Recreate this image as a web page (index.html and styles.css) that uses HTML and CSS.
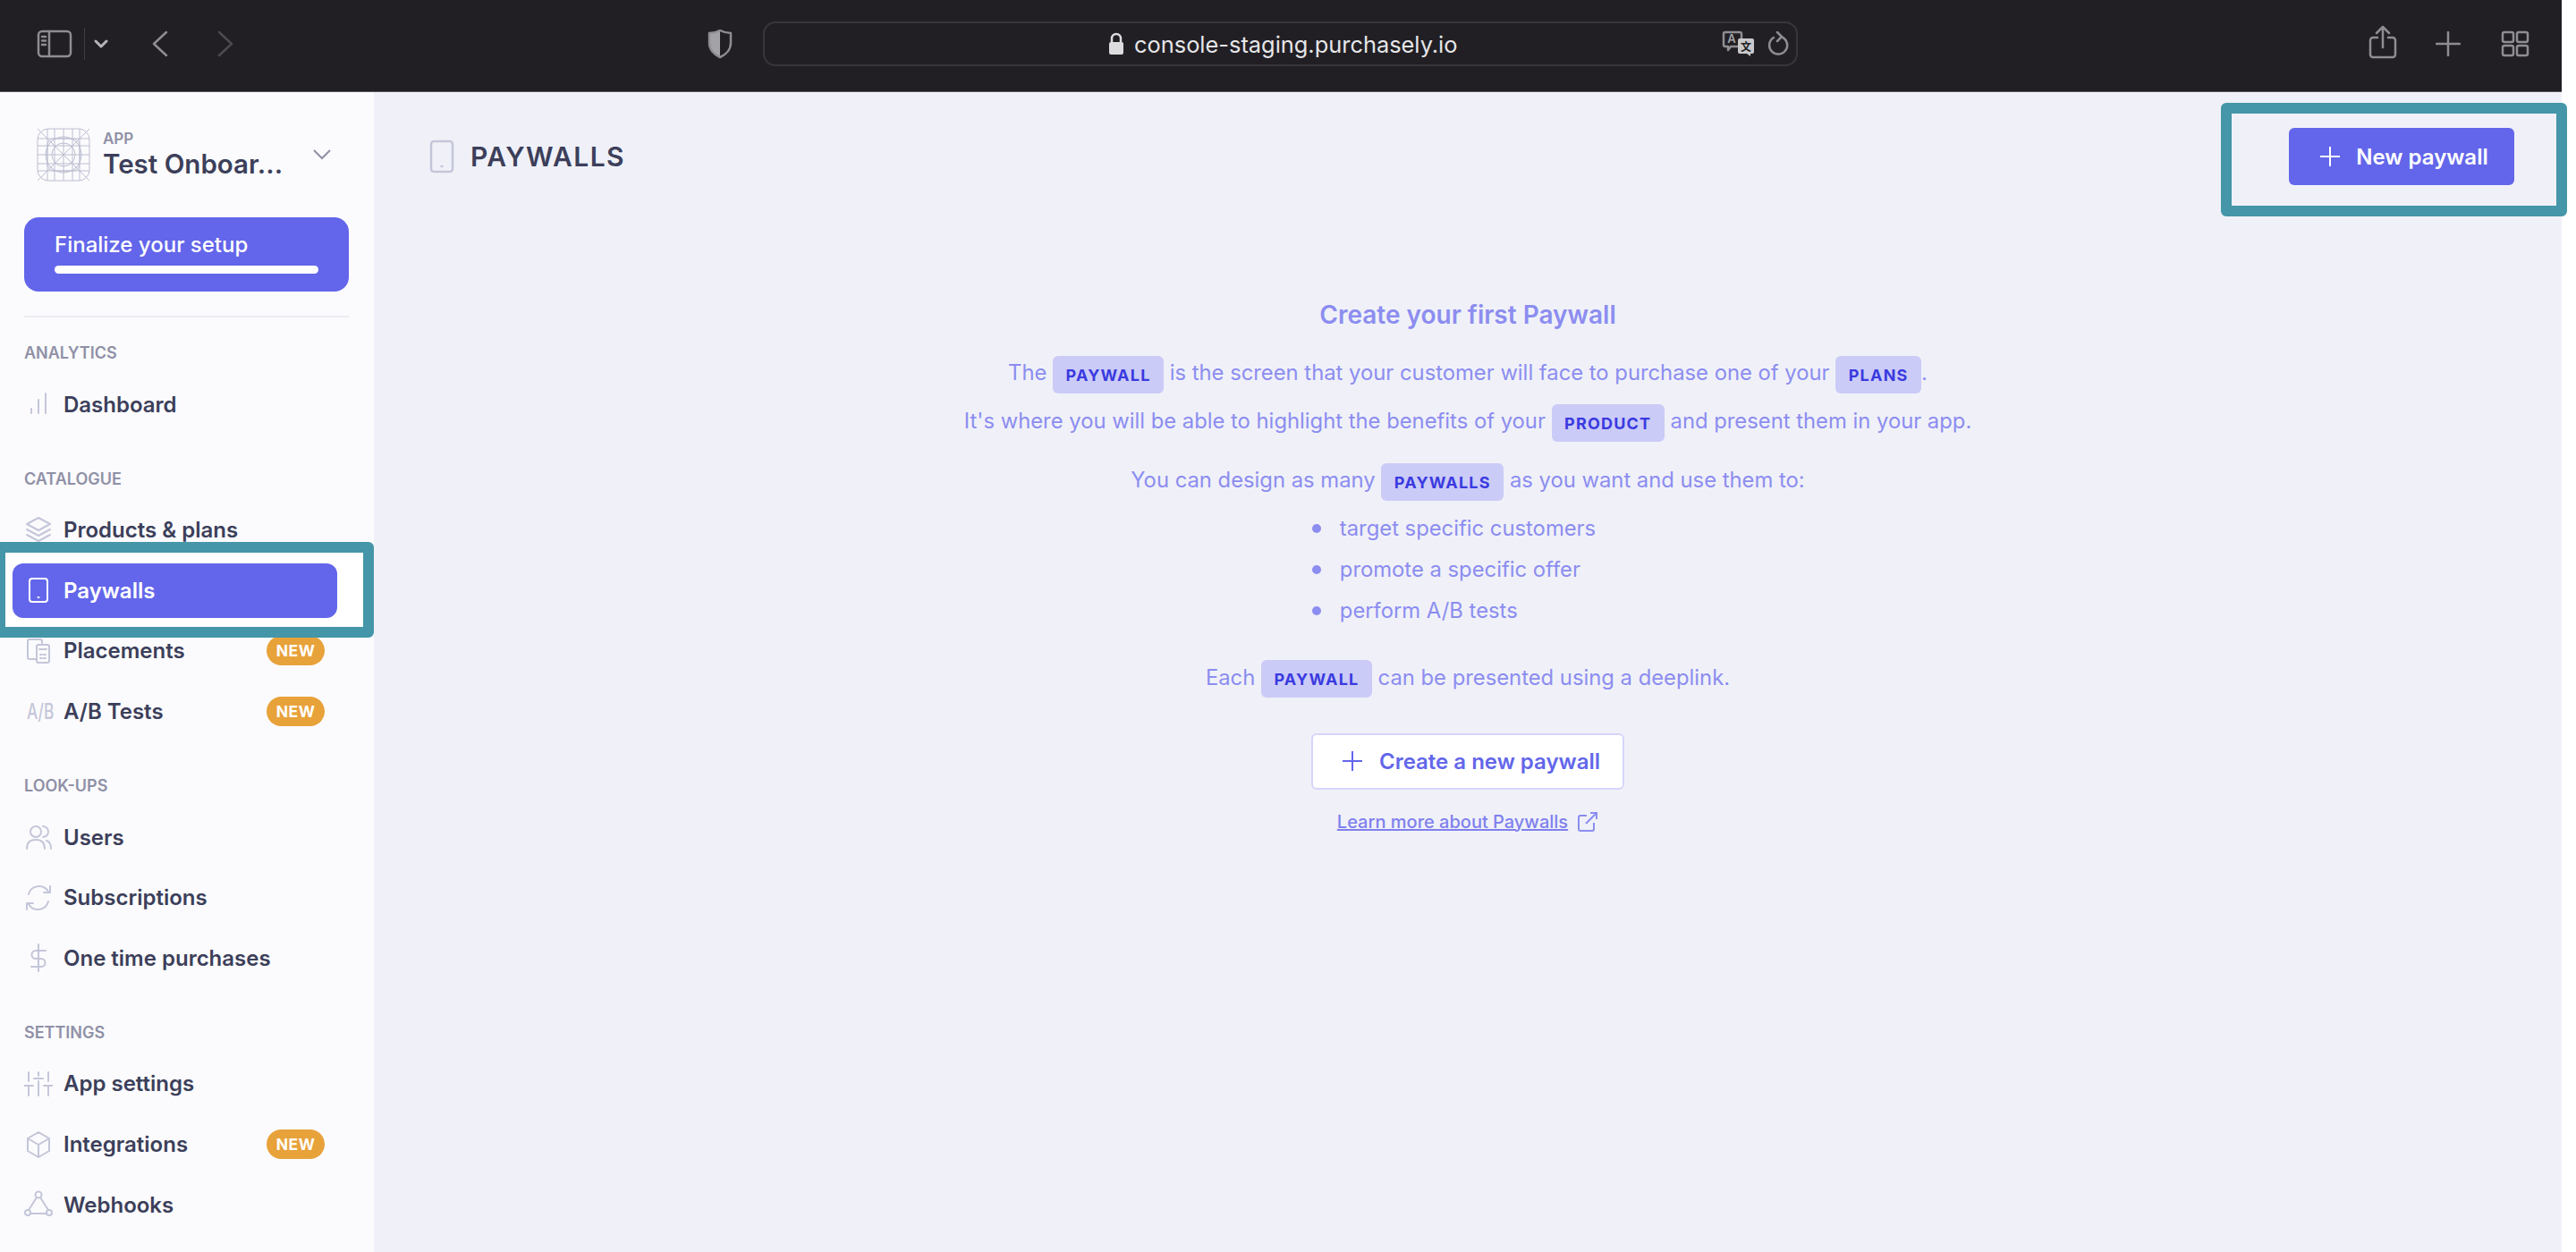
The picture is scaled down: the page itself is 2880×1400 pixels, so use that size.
FILE: index.html
```html
<!DOCTYPE html>
<html lang="en">
<head>
  <meta charset="UTF-8" />
  <title>Purchasely Console</title>
  <link rel="stylesheet" href="styles.css">
</head>
<body>
  <div class="app">
    <header class="toolbar">
      <div class="toolbar-left">
        <svg class="tb-sidebar" width="40" height="32" viewBox="0 0 40 32"><rect x="2" y="2" width="36" height="28" rx="4"/><path d="M14 2v28M6 8h4M6 12.500h4M6 17h4"/></svg>
        <span class="tb-sep"></span>
        <svg class="tb-chevron" width="16" height="12" viewBox="0 0 16 12"><path d="M2 3l6 6 6-6"/></svg>
        <svg class="tb-back" width="20" height="30" viewBox="0 0 20 30"><path d="M17 2L3 15l14 13"/></svg>
        <svg class="tb-forward" width="20" height="30" viewBox="0 0 20 30"><path d="M3 2l14 13L3 28"/></svg>
      </div>
      <svg class="tb-shield" width="28" height="34" viewBox="0 0 28 34"><path class="fill" d="M14 2C10 4 6 5 2 5v11c0 7 5 13 12 16z"/><path d="M14 2C10 4 6 5 2 5v11c0 7 5 13 12 16 7-3 12-9 12-16V5c-4 0-8-1-12-3z"/></svg>
      <div class="url-bar">
        <div class="url-center">
          <svg width="18" height="26" viewBox="0 0 18 26"><path class="lock-arc" d="M4 12V7a5 5 0 0 1 10 0v5"/><rect x="1" y="11" width="16" height="14" rx="2"/></svg>
          <span class="url-text">console-staging.purchasely.io</span>
        </div>
        <svg class="tb-translate" width="38" height="30" viewBox="0 0 38 30"><path d="M4 2h16a2 2 0 0 1 2 2v12a2 2 0 0 1-2 2H10l-3 4v-4H4a2 2 0 0 1-2-2V4a2 2 0 0 1 2-2z"/><text x="11" y="14" class="tr-a">A</text><path class="fill-light" d="M20 9h14a2 2 0 0 1 2 2v13a2 2 0 0 1-2 2h-2v3l-4-3h-8a2 2 0 0 1-2-2V11a2 2 0 0 1 2-2z"/><text x="27" y="23" class="tr-b">文</text></svg>
        <svg class="tb-reload" width="24" height="28" viewBox="0 0 24 28"><path d="M7 7a10 10 0 1 0 8-1M11 1l5 5-5 5"/></svg>
      </div>
      <div class="toolbar-right">
        <svg width="32" height="38" viewBox="0 0 32 38"><path d="M10 14H5a3 3 0 0 0-3 3v16a3 3 0 0 0 3 3h22a3 3 0 0 0 3-3V17a3 3 0 0 0-3-3h-5M16 25V2M9 9l7-7 7 7"/></svg>
        <svg width="28" height="28" viewBox="0 0 28 28"><path d="M14 1v26M1 14h26"/></svg>
        <svg class="tb-tabs" width="32" height="30" viewBox="0 0 32 30"><rect x="2" y="2" width="12" height="11" rx="2"/><rect x="18" y="2" width="12" height="11" rx="2"/><rect x="2" y="17" width="12" height="11" rx="2"/><rect x="18" y="17" width="12" height="11" rx="2"/></svg>
      </div>
    </header>

    <div class="layout">
      <aside class="sidebar">
        <div class="app-switch">
          <svg class="app-icon" width="60" height="60" viewBox="0 0 60 60">
            <rect x="1" y="1" width="58" height="58" rx="12"/>
            <circle cx="30" cy="30" r="13"/><circle cx="30" cy="30" r="20"/>
            <rect x="12" y="12" width="36" height="36" rx="8"/>
            <path d="M1 1l58 58M59 1L1 59M12 1v58M20 1v58M30 1v58M40 1v58M48 1v58M1 12h58M1 20h58M1 30h58M1 40h58M1 48h58"/>
          </svg>
          <div class="app-name">
            <div class="app-label">APP</div>
            <div class="app-title">Test Onboar...</div>
          </div>
          <svg class="app-chevron" width="20" height="12" viewBox="0 0 20 12"><path d="M1 1l9 9 9-9"/></svg>
        </div>

        <a class="setup-btn">
          <span>Finalize your setup</span>
          <span class="setup-progress"></span>
        </a>
        <div class="side-divider"></div>

        <section class="nav-section">
          <div class="nav-label">Analytics</div>
          <a class="nav-item">
            <svg class="nav-icon" viewBox="0 0 32 32"><path d="M8 21v5M16 11v15M24 4v22"/></svg>
            <span>Dashboard</span>
          </a>
        </section>

        <section class="nav-section">
          <div class="nav-label">Catalogue</div>
          <a class="nav-item">
            <svg class="nav-icon" viewBox="0 0 32 32"><path d="M16 2l13 7-13 7L3 9zM3 15l13 7 13-7M3 21l13 7 13-7"/></svg>
            <span>Products &amp; plans</span>
          </a>
          <div class="callout callout-nav">
            <a class="nav-item active">
              <svg class="nav-icon" viewBox="0 0 32 32"><rect x="6" y="3" width="20" height="26" rx="3"/><path d="M15.500 24h1"/></svg>
              <span>Paywalls</span>
            </a>
          </div>
          <a class="nav-item">
            <svg class="nav-icon" viewBox="0 0 32 32"><path d="M20 7V5a2 2 0 0 0-2-2H6a2 2 0 0 0-2 2v18a2 2 0 0 0 2 2h8"/><rect x="14" y="9" width="14" height="20" rx="2"/><path d="M17 14h8M18 20h2M22 20h2M18 24h2M22 24h2"/></svg>
            <span>Placements</span>
            <span class="badge">NEW</span>
          </a>
          <a class="nav-item">
            <span class="ab-icon">A/B</span>
            <span>A/B Tests</span>
            <span class="badge">NEW</span>
          </a>
        </section>

        <section class="nav-section">
          <div class="nav-label">Look-ups</div>
          <a class="nav-item">
            <svg class="nav-icon" viewBox="0 0 32 32"><circle cx="13" cy="10" r="6"/><path d="M21 4a6 6 0 0 1 0 12M3 29c0-7 4-10 10-10s10 3 10 10M25 20c3 1 5 4 5 9"/></svg>
            <span>Users</span>
          </a>
          <a class="nav-item">
            <svg class="nav-icon" viewBox="0 0 32 32"><path d="M5 12A12 12 0 0 1 27 9M29 3v7h-7M27 20A12 12 0 0 1 5 23M3 29v-7h7"/></svg>
            <span>Subscriptions</span>
          </a>
          <a class="nav-item">
            <svg class="nav-icon" viewBox="0 0 32 32"><path d="M16 1v30M24 8H13a4.500 4.500 0 0 0 0 9h6a4.500 4.500 0 0 1 0 9H8"/></svg>
            <span>One time purchases</span>
          </a>
        </section>

        <section class="nav-section">
          <div class="nav-label">Settings</div>
          <a class="nav-item">
            <svg class="nav-icon" viewBox="0 0 32 32"><path d="M5 3v10M5 19v10M0 18h10M16 3v4M11 10h10M16 13v16M27 3v10M27 19v10M22 18h10"/></svg>
            <span>App settings</span>
          </a>
          <a class="nav-item">
            <svg class="nav-icon" viewBox="0 0 32 32"><path d="M16 2l12 7v14l-12 7-12-7V9zM4 9l12 7 12-7M16 16v14"/></svg>
            <span>Integrations</span>
            <span class="badge">NEW</span>
          </a>
          <a class="nav-item">
            <svg class="nav-icon" viewBox="0 0 32 32"><circle cx="16" cy="5" r="3.500"/><circle cx="4" cy="25" r="3"/><circle cx="28" cy="25" r="3"/><path d="M14 8L5 22M18 8l9 14M7 26h18"/></svg>
            <span>Webhooks</span>
          </a>
        </section>
      </aside>

      <main class="main">
        <div class="main-header">
          <div class="page-title">
            <svg width="28" height="38" viewBox="0 0 28 38"><rect x="2" y="2" width="24" height="34" rx="3"/><path d="M13.500 30h1"/></svg>
            <h1>PAYWALLS</h1>
          </div>
          <div class="callout callout-new">
            <a class="primary-btn">
              <svg width="24" height="24" viewBox="0 0 24 24"><path d="M12 1v22M1 12h22"/></svg>
              <span>New paywall</span>
            </a>
          </div>
        </div>

        <div class="empty-state">
          <h2>Create your first Paywall</h2>
          <div class="copy">
            <p>The <span class="chip">PAYWALL</span> is the screen that your customer will face to purchase one of your <span class="chip">PLANS</span>.</p>
            <p>It's where you will be able to highlight the benefits of your <span class="chip">PRODUCT</span> and present them in your app.</p>
          </div>
          <p class="copy-many">You can design as many <span class="chip">PAYWALLS</span> as you want and use them to:</p>
          <ul class="uses">
            <li>target specific customers</li>
            <li>promote a specific offer</li>
            <li>perform A/B tests</li>
          </ul>
          <p class="copy-each">Each <span class="chip">PAYWALL</span> can be presented using a deeplink.</p>
          <a class="outline-btn">
            <svg width="24" height="24" viewBox="0 0 24 24"><path d="M12 1v22M1 12h22"/></svg>
            <span>Create a new paywall</span>
          </a>
          <div class="learn-more">
            <a>Learn more about Paywalls</a>
            <svg width="24" height="24" viewBox="0 0 24 24"><path d="M11 5H4a2 2 0 0 0-2 2v13a2 2 0 0 0 2 2h13a2 2 0 0 0 2-2v-7M10 14L22 2M15 2h7v7"/></svg>
          </div>
        </div>
      </main>
    </div>
  </div>
</body>
</html>
```

FILE: styles.css
```css
html, body {
  margin: 0;
  height: 100%;
  background: #fff;
  overflow: hidden;
}
body {
  font-family: "Inter", "Liberation Sans", sans-serif;
}
.app {
  width: 2864px;
  height: 1400px;
  display: flex;
  flex-direction: column;
}

/* browser chrome */
.toolbar {
  height: 103px;
  box-sizing: border-box;
  padding-bottom: 4px;
  flex: none;
  display: flex;
  align-items: center;
  background: #211f24;
  border-bottom: 1px solid #55545a;
}
.toolbar svg {
  fill: none;
  stroke: #8e8d91;
  stroke-width: 2.500;
  stroke-linecap: round;
  stroke-linejoin: round;
}
.toolbar-left {
  display: flex;
  align-items: center;
  width: 791px;
  padding-left: 41px;
  box-sizing: border-box;
}
.tb-sep {
  width: 1px;
  height: 36px;
  background: #3d3c41;
  margin: 0 10px 0 13px;
}
.toolbar svg.tb-chevron {
  stroke: #b5b4b8;
  stroke-width: 3;
}
.tb-back {
  margin-left: 48px;
}
.tb-forward {
  margin-left: 53px;
}
.toolbar svg.tb-forward {
  stroke: #4b4a4f;
}
.toolbar .fill {
  fill: #a3a2a6;
  stroke: none;
}
.toolbar .fill-light {
  fill: #c9c9cc;
  stroke: none;
}
.url-bar {
  width: 1157px;
  height: 50px;
  margin-left: 34px;
  box-sizing: border-box;
  border: 2px solid #37363b;
  border-radius: 14px;
  display: flex;
  align-items: center;
  position: relative;
}
.url-center {
  position: absolute;
  left: 384px;
  display: flex;
  align-items: center;
  gap: 11px;
}
.toolbar .url-center svg {
  stroke: none;
  fill: #dcdcde;
}
.toolbar .url-center .lock-arc {
  fill: none;
  stroke: #dcdcde;
  stroke-width: 2.500;
}
.url-text {
  color: #e6e6e8;
  font-size: 25.400px;
  font-weight: 400;
}
.tb-translate {
  margin-left: 1070px;
}
.toolbar svg .tr-a {
  font-size: 13px;
  font-weight: 600;
  fill: #a3a2a6;
  stroke: none;
  text-anchor: middle;
}
.toolbar svg .tr-b {
  font-family: "Noto Sans CJK SC", sans-serif;
  font-size: 12px;
  font-weight: 700;
  fill: #211f24;
  stroke: none;
  text-anchor: middle;
}
.tb-reload {
  margin-left: 13px;
}
.toolbar-right {
  display: flex;
  align-items: center;
  margin-left: 638px;
  gap: 43px;
}
.toolbar-right svg:first-child {
  margin-top: -5px;
}
.toolbar-right .tb-tabs {
  margin-left: 2px;
}

.layout {
  flex: 1;
  display: flex;
  min-height: 0;
}

/* sidebar */
.sidebar {
  width: 418px;
  flex: none;
  box-sizing: border-box;
  padding: 40px 41px 0 14px;
  background: #fbfbfd;
}
.app-switch {
  display: flex;
  align-items: center;
  height: 60px;
  padding-left: 27px;
}
.app-icon {
  fill: none;
  stroke: #bcbed0;
  stroke-width: 1;
}
.app-name {
  margin-left: 14px;
  width: 235px;
}
.app-label {
  font-size: 17px;
  line-height: 19px;
  font-weight: 600;
  color: #8f90a6;
}
.app-title {
  font-size: 29.500px;
  line-height: 36px;
  font-weight: 600;
  color: #3c3f5a;
}
.app-chevron {
  fill: none;
  stroke: #8f90a6;
  stroke-width: 2;
}
.setup-btn {
  display: block;
  margin: 40px 0 0 13px;
  width: 363px;
  height: 83px;
  box-sizing: border-box;
  padding: 15px 34px 0;
  background: #6366ea;
  border-radius: 16px;
  color: #fff;
  font-size: 24px;
  font-weight: 500;
  line-height: 32px;
}
.setup-progress {
  display: block;
  height: 9px;
  margin-top: 7px;
  background: #fff;
  border-radius: 5px;
}
.side-divider {
  height: 2px;
  width: 363px;
  margin: 27px 0 0 13px;
  background: #ebebf2;
}
.nav-section {
  margin-top: 38px;
}
.side-divider + .nav-section {
  margin-top: 25px;
}
.nav-label {
  height: 30px;
  line-height: 30px;
  margin: 0 0 11.500px 13px;
  font-size: 18px;
  font-weight: 600;
  color: #8f90a6;
  text-transform: uppercase;
}
.nav-item {
  display: flex;
  align-items: center;
  height: 61px;
  margin-bottom: 6.700px;
  padding: 0 14px 0 13px;
  border-radius: 12px;
  color: #3c3f5a;
  font-size: 24px;
  font-weight: 600;
}
.nav-icon {
  width: 32px;
  height: 32px;
  flex: none;
  margin-right: 12px;
  fill: none;
  stroke: #c4c6d9;
  stroke-width: 2;
  stroke-linecap: round;
  stroke-linejoin: round;
}
.ab-icon {
  width: 32px;
  flex: none;
  margin-right: 12px;
  white-space: nowrap;
  font-size: 24px;
  font-weight: 500;
  color: #c4c6d9;
  transform-origin: left center;
  transform: translateX(3px) scaleX(0.72);
}
.nav-item.active {
  position: relative;
  z-index: 1;
  background: #6366ea;
  color: #fff;
}
.nav-item.active .nav-icon {
  stroke: #fff;
}
.badge {
  margin-left: auto;
  width: 65px;
  height: 33px;
  line-height: 33px;
  text-align: center;
  border-radius: 17px;
  background: #e8a23a;
  color: #fff;
  font-size: 17.500px;
  font-weight: 700;
  letter-spacing: 0.500px;
}

/* teal annotation frames */
.callout {
  position: relative;
}
.callout::before {
  content: "";
  position: absolute;
  box-sizing: border-box;
  border: 12px solid #4496a8;
  border-radius: 6px;
}
.callout-nav {
  margin-bottom: 6.700px;
}
.callout-nav .nav-item {
  margin-bottom: 0;
}
.callout-nav::before {
  top: -24px;
  bottom: -22px;
  left: -20px;
  right: -41px;
  background: #fff;
}
.callout-new::before {
  top: -28px;
  bottom: -35px;
  left: -76px;
  right: -59px;
}

/* main */
.main {
  flex: 1;
  background: #f0f1f8;
  min-width: 0;
}
.main-header {
  display: flex;
  align-items: center;
  justify-content: space-between;
  padding: 40px 53px 0 62px;
}
.page-title {
  display: flex;
  align-items: center;
  gap: 18px;
}
.page-title svg {
  fill: none;
  stroke: #c4c6d9;
  stroke-width: 2.500;
  stroke-linecap: round;
}
.page-title h1 {
  margin: 0;
  font-size: 30px;
  font-weight: 600;
  letter-spacing: 1.400px;
  color: #3c3f5a;
}
.primary-btn {
  position: relative;
  display: flex;
  align-items: center;
  justify-content: center;
  gap: 17px;
  width: 252px;
  height: 64px;
  box-sizing: border-box;
  padding-left: 5px;
  background: #6366ea;
  border-radius: 6px;
  color: #fff;
  font-size: 24px;
  font-weight: 600;
}
.primary-btn svg {
  fill: none;
  stroke: #fff;
  stroke-width: 2;
}
.empty-state {
  display: flex;
  flex-direction: column;
  align-items: center;
  color: #8c8df0;
  font-size: 23.800px;
}
.empty-state h2 {
  margin: 125px 0 0;
  font-size: 28px;
  line-height: 40px;
  font-weight: 600;
  color: #8c8df0;
}
.empty-state p {
  margin: 0;
  line-height: 54px;
  text-align: center;
}
.copy {
  margin-top: 18px;
}
.empty-state .copy-many {
  margin-top: 12px;
}
.chip {
  display: inline-block;
  height: 42px;
  line-height: 44px;
  padding: 0 14.500px;
  vertical-align: middle;
  background: #cbcbf7;
  border-radius: 6px;
  color: #3a3ae0;
  font-size: 18px;
  font-weight: 700;
  letter-spacing: 1.200px;
}
.uses {
  margin: 4px 0 0;
  padding: 0;
  list-style: none;
  color: #8c8df0;
}
.uses li {
  position: relative;
  height: 46px;
  line-height: 46px;
}
.uses li::before {
  content: "";
  position: absolute;
  left: -31px;
  top: 18px;
  width: 10px;
  height: 10px;
  border-radius: 50%;
  background: #8c8df0;
}
.empty-state .copy-each {
  margin-top: 24.500px;
}
.outline-btn {
  display: flex;
  align-items: center;
  justify-content: center;
  gap: 18px;
  width: 350px;
  height: 63px;
  margin-top: 35px;
  box-sizing: border-box;
  padding-left: 7px;
  background: #fff;
  border: 2px solid #d5d5fb;
  border-radius: 6px;
  color: #6366ea;
  font-size: 24px;
  font-weight: 600;
}
.outline-btn svg {
  fill: none;
  stroke: #6366ea;
  stroke-width: 2;
}
.learn-more {
  display: flex;
  align-items: center;
  gap: 10px;
  margin-top: 24px;
  color: #7f80ee;
  font-size: 20px;
  font-weight: 500;
}
.learn-more a {
  text-decoration: underline;
}
.learn-more svg {
  fill: none;
  stroke: #8c8df0;
  stroke-width: 2;
}
```
